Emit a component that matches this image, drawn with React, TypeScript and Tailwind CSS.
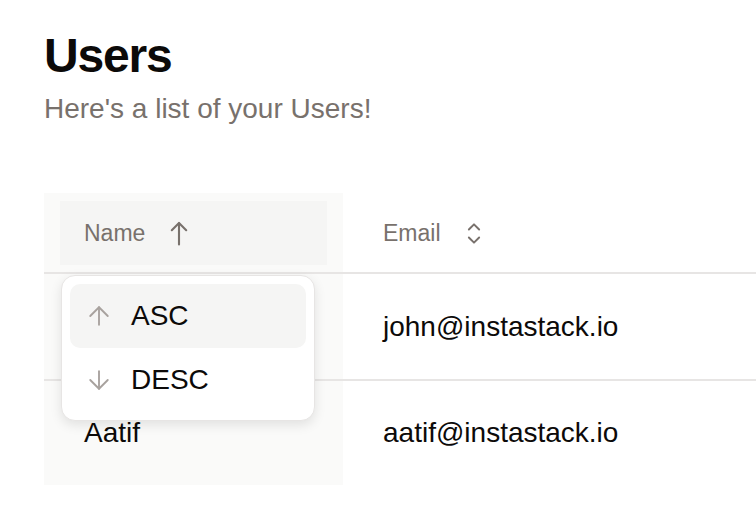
import React from "react";
import { ArrowDown, ArrowUp } from "lucide-react";

const users = [
  { name: "John", email: "john@instastack.io" },
  { name: "Aatif", email: "aatif@instastack.io" }
];

function UpArrow({ className }: { className?: string }) {
  return (
    <svg viewBox="0 0 18 26" className={className} fill="none" stroke="currentColor" strokeWidth="2.2" strokeLinecap="round" strokeLinejoin="round">
      <path d="M1.5 9.5 9 2l7.5 7.5" />
      <path d="M9 2.5V24.5" />
    </svg>
  );
}

function UpDown({ className }: { className?: string }) {
  return (
    <svg viewBox="0 0 14 20" className={className} fill="none" stroke="currentColor" strokeWidth="1.7" strokeLinecap="round" strokeLinejoin="round">
      <path d="M2.5 6.5 7 2l4.5 4.5" />
      <path d="M2.5 13.5 7 18l4.5-4.5" />
    </svg>
  );
}

export default function App() {
  return (
    <div className="min-h-screen overflow-hidden bg-white pl-[44px] pt-[30px] font-['Liberation_Sans',Arial,sans-serif] text-[#0c0a09]">
      <h1 className="text-[48px] font-bold leading-[52px] tracking-tight">Users</h1>
      <p className="mt-[10px] text-[28px] leading-[34px] text-[#78716c]">Here's a list of your Users!</p>

      <div className="mt-[67px] w-full">
        {/* header */}
        <div className="grid h-[81px] grid-cols-[299px_1fr] border-b-2 border-[#e7e5e4]">
          <div className="relative bg-[#fafaf9] px-4 pt-2">
            <div className="flex h-16 items-center gap-[25px] bg-[#f5f5f4] pl-6 text-[23px] text-[#78716c]">
              <span>Name</span>
              <UpArrow className="h-[25px] w-[18px]" />
            </div>

            <div className="absolute left-[17px] top-[82px] z-10 w-[254px] rounded-[14px] border border-[#e7e5e4] bg-white p-2 shadow-[0_4px_12px_rgba(0,0,0,0.10)]">
              <div className="flex h-16 items-center gap-[17px] rounded-[10px] bg-[#f5f5f4] pl-[14px] text-[28px]">
                <ArrowUp size={30} strokeWidth={1.5} className="text-[#a8a29e]" />
                <span>ASC</span>
              </div>
              <div className="flex h-16 items-center gap-[17px] rounded-[10px] pl-[14px] text-[28px]">
                <ArrowDown size={30} strokeWidth={1.5} className="text-[#a8a29e]" />
                <span>DESC</span>
              </div>
            </div>
          </div>
          <div className="px-4 pt-2">
            <div className="flex h-16 items-center gap-[25px] pl-6 text-[23px] text-[#78716c]">
              <span>Email</span>
              <UpDown className="h-[23px] w-[16px]" />
            </div>
          </div>
        </div>

        {/* rows */}
        {users.map((u, i) => (
          <div
            key={u.email}
            className={`grid grid-cols-[299px_1fr] text-[28px] ${i === 0 ? "h-[107px] border-b-2 border-[#e7e5e4]" : "h-[104px]"}`}
          >
            <div className="flex items-center bg-[#fafaf9] px-10">{u.name}</div>
            <div className="flex items-center px-10">{u.email}</div>
          </div>
        ))}
      </div>
    </div>
  );
}
